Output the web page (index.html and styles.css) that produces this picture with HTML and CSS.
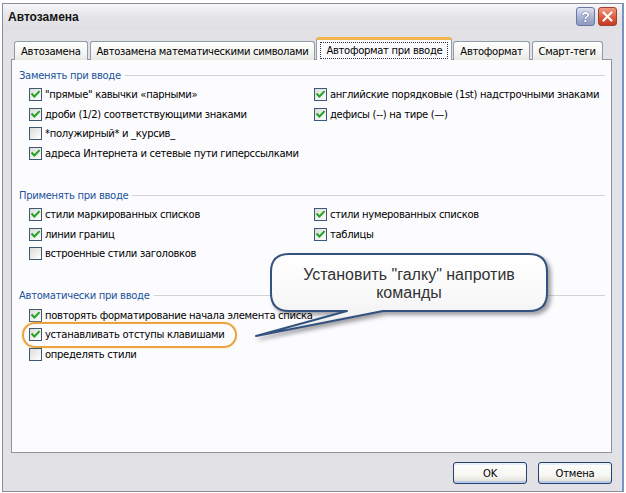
FILE: index.html
```html
<!DOCTYPE html>
<html lang="ru">
<head>
<meta charset="utf-8">
<title>Автозамена</title>
<link rel="stylesheet" href="styles.css">
</head>
<body>
<div class="window">
  <div class="titlebar">
    <span class="title">Автозамена</span>
    <div class="tb-buttons">
      <span class="tb-btn help">?</span>
      <span class="tb-btn close"><svg viewBox="0 0 17 17" width="17" height="17"><path d="M4.5 4.5 L12.5 12.5 M12.5 4.5 L4.5 12.5" stroke="#fff" stroke-width="2.2" stroke-linecap="round"/></svg></span>
    </div>
  </div>
  <div class="client">
    <div class="tabs">
      <div class="tab">Автозамена</div>
      <div class="tab">Автозамена математическими символами</div>
      <div class="tab active"><span class="focus">Автоформат при вводе</span></div>
      <div class="tab">Автоформат</div>
      <div class="tab">Смарт-теги</div>
    </div>
    <div class="panel">
      <section class="group">
        <div class="group-title"><span>Заменять при вводе</span></div>
        <div class="grid">
          <label class="opt"><span class="cb"><svg viewBox="0 0 11 11"><path d="M2.2 5.2 L4.4 7.5 L8.9 2.8" class="chk"/></svg></span>"прямые" кавычки «парными»</label>
          <label class="opt"><span class="cb"><svg viewBox="0 0 11 11"><path d="M2.2 5.2 L4.4 7.5 L8.9 2.8" class="chk"/></svg></span>английские порядковые (1st) надстрочными знаками</label>
          <label class="opt"><span class="cb"><svg viewBox="0 0 11 11"><path d="M2.2 5.2 L4.4 7.5 L8.9 2.8" class="chk"/></svg></span>дроби (1/2) соответствующими знаками</label>
          <label class="opt"><span class="cb"><svg viewBox="0 0 11 11"><path d="M2.2 5.2 L4.4 7.5 L8.9 2.8" class="chk"/></svg></span>дефисы (--) на тире (—)</label>
          <label class="opt wide"><span class="cb"></span>*полужирный* и _курсив_</label>
          <label class="opt wide"><span class="cb"><svg viewBox="0 0 11 11"><path d="M2.2 5.2 L4.4 7.5 L8.9 2.8" class="chk"/></svg></span>адреса Интернета и сетевые пути гиперссылками</label>
        </div>
      </section>
      <section class="group">
        <div class="group-title"><span>Применять при вводе</span></div>
        <div class="grid">
          <label class="opt"><span class="cb"><svg viewBox="0 0 11 11"><path d="M2.2 5.2 L4.4 7.5 L8.9 2.8" class="chk"/></svg></span>стили маркированных списков</label>
          <label class="opt"><span class="cb"><svg viewBox="0 0 11 11"><path d="M2.2 5.2 L4.4 7.5 L8.9 2.8" class="chk"/></svg></span>стили нумерованных списков</label>
          <label class="opt"><span class="cb"><svg viewBox="0 0 11 11"><path d="M2.2 5.2 L4.4 7.5 L8.9 2.8" class="chk"/></svg></span>линии границ</label>
          <label class="opt"><span class="cb"><svg viewBox="0 0 11 11"><path d="M2.2 5.2 L4.4 7.5 L8.9 2.8" class="chk"/></svg></span>таблицы</label>
          <label class="opt wide"><span class="cb"></span>встроенные стили заголовков</label>
        </div>
      </section>
      <section class="group">
        <div class="group-title"><span>Автоматически при вводе</span></div>
        <div class="grid">
          <label class="opt wide"><span class="cb"><svg viewBox="0 0 11 11"><path d="M2.2 5.2 L4.4 7.5 L8.9 2.8" class="chk"/></svg></span>повторять форматирование начала элемента списка</label>
          <label class="opt wide marked"><span class="cb"><svg viewBox="0 0 11 11"><path d="M2.2 5.2 L4.4 7.5 L8.9 2.8" class="chk"/></svg></span>устанавливать отступы клавишами</label>
          <label class="opt wide"><span class="cb"></span>определять стили</label>
        </div>
      </section>
    </div>
    <div class="actions">
      <button class="btn default">OK</button>
      <button class="btn">Отмена</button>
    </div>
  </div>
  <div class="callout">
    <svg class="balloon" viewBox="0 0 305 92" width="305" height="92">
      <defs>
        <linearGradient id="bfill" x1="0" y1="0" x2="0" y2="1">
          <stop offset="0" stop-color="#ffffff"/>
          <stop offset="0.6" stop-color="#f7f7f8"/>
          <stop offset="1" stop-color="#e9e9ec"/>
        </linearGradient>
      </defs>
      <path d="M39 4 H279 Q297 4 297 22 V43 Q297 61 279 61 H133 L6 86 L97 61 H39 Q21 61 21 43 V22 Q21 4 39 4 Z" fill="url(#bfill)" stroke="#33527e" stroke-width="2" stroke-linejoin="round"/>
    </svg>
    <div class="callout-text">Установить "галку" напротив<br>команды</div>
  </div>
</div>
</body>
</html>
```
FILE: styles.css
```css
body {
  margin: 0;
  background: #ffffff;
  font-family: "DejaVu Sans", sans-serif;
  font-size: 10px;
  letter-spacing: -0.3px;
  color: #000;
}

.window {
  margin: 3px 0 0 2px;
  width: 622px;
  height: 489px;
  box-sizing: border-box;
  border: 1px solid #8c8c98;
  border-right: 2px solid #7b93c2;
  display: flex;
  flex-direction: column;
  background: #e2e1e6;
  position: relative;
}

.titlebar {
  height: 25px;
  flex: none;
  display: flex;
  align-items: center;
  padding: 0 5px 0 5px;
  background: linear-gradient(#f7f7f9, #e6e6ea 45%, #dedee3);
}

.title {
  flex: 1;
  font-family: "Liberation Sans", sans-serif;
  font-weight: bold;
  font-size: 12px;
  letter-spacing: 0;
  color: #141414;
}

.tb-buttons {
  display: flex;
  gap: 3px;
}

.tb-btn {
  width: 19px;
  height: 19px;
  box-sizing: border-box;
  border-radius: 3px;
  display: flex;
  align-items: center;
  justify-content: center;
}

.help {
  background: linear-gradient(#dde1ef, #aab3d4 55%, #8e99c4);
  border: 1px solid #6a77a3;
  color: #ffffff;
  font: bold 14px "Liberation Sans", sans-serif;
  letter-spacing: 0;
  text-shadow: 0 0 1px #43527e, 0 0 1px #43527e;
}

.close {
  background: linear-gradient(#f09a82, #de5a40 55%, #c53b24);
  border: 1px solid #a0402f;
}

.client {
  flex: 1;
  display: flex;
  flex-direction: column;
  padding: 8px 10px 0 8px;
}

.tabs {
  display: flex;
  align-items: flex-end;
  padding-left: 3px;
  height: 23px;
  position: relative;
  z-index: 1;
  margin-bottom: -1px;
}

.tab {
  height: 19px;
  box-sizing: border-box;
  padding: 0 6px;
  border: 1px solid #919ba8;
  border-bottom: none;
  border-radius: 3px 3px 0 0;
  background: linear-gradient(#ffffff, #f4f4f1 60%, #e9e9e4);
  display: flex;
  align-items: center;
  margin-right: 2px;
  white-space: nowrap;
}

.tab.active {
  height: 23px;
  padding: 0 4px;
  margin-left: -1px;
  margin-right: 1px;
  background: #fcfcfe;
  border-top: 3px solid #f2b54a;
}

.focus {
  outline: 1px dotted #333;
  padding: 2px 5px;
}

.panel {
  height: 394px;
  box-sizing: border-box;
  border: 1px solid #8e949c;
  background: #fcfcfe;
  padding: 5px 6px 0 7px;
}

.group + .group {
  margin-top: 22px;
}

.group-title {
  display: flex;
  align-items: center;
  height: 20px;
  color: #21529c;
  gap: 4px;
}

.group-title::after {
  content: "";
  flex: 1;
  border-top: 1px solid #d2d2d0;
}

.grid {
  display: grid;
  grid-template-columns: 285px 1fr;
  grid-auto-rows: 19.5px;
  padding-left: 10px;
}

.opt {
  display: flex;
  align-items: center;
  gap: 3px;
  white-space: nowrap;
  justify-self: start;
  position: relative;
}

.opt.wide {
  grid-column: 1 / -1;
}

.cb {
  width: 13px;
  height: 13px;
  box-sizing: border-box;
  border: 1px solid #3d5873;
  background: linear-gradient(135deg, #dcdcd7, #f4f4f2 70%, #ffffff);
  display: flex;
  flex: none;
}

.cb svg {
  width: 11px;
  height: 11px;
}

.chk {
  fill: none;
  stroke: #22a324;
  stroke-width: 2;
  stroke-linecap: square;
}

.marked::after {
  content: "";
  position: absolute;
  left: -7px;
  right: -12px;
  top: -3px;
  bottom: -3px;
  border: 2px solid #eaa33f;
  border-radius: 14px;
  box-shadow: 0 0 2px #f6d59a;
}

.actions {
  display: flex;
  justify-content: flex-end;
  gap: 11px;
  padding-top: 9px;
}

.btn {
  width: 74px;
  height: 22px;
  font-family: "DejaVu Sans", sans-serif;
  font-size: 10px;
  letter-spacing: -0.2px;
  color: #000;
  border: 1px solid #24406c;
  border-radius: 3px;
  background: linear-gradient(#ffffff, #f5f5f1 65%, #dcd9ce);
  box-shadow: inset 0 -2px 0 #b9c9e8, inset 0 2px 0 #e7eefb;
  padding: 0;
}

.callout {
  position: absolute;
  left: 247px;
  top: 246px;
  width: 305px;
  height: 92px;
}

.balloon {
  display: block;
  filter: drop-shadow(3px 3px 2px rgba(40, 40, 50, 0.45));
}

.callout-text {
  position: absolute;
  left: 21px;
  width: 276px;
  top: 16px;
  text-align: center;
  font-family: "Liberation Sans", sans-serif;
  font-size: 16px;
  letter-spacing: 0;
  line-height: 18px;
  color: #333333;
}
```
